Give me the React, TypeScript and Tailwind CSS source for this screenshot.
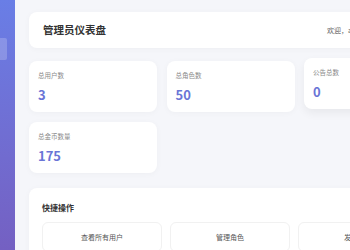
import React from "react";

const font = { fontFamily: '"Noto Sans CJK SC", "Noto Sans", sans-serif' };

function Stat({ label, value, hover }: { label: string; value: string; hover?: boolean }) {
  return (
    <div
      className={`w-[128px] h-[51px] bg-white rounded-[8px] pl-[9px] pt-[10px] ${
        hover ? "-translate-y-[3px] shadow-[0_4px_10px_rgba(0,0,0,0.06)]" : "shadow-[0_1px_6px_rgba(0,0,0,0.035)]"
      }`}
    >
      <div className="text-[6.5px] leading-[9px] text-[#8a8a8a]">{label}</div>
      <div className="mt-[7px] text-[13px] leading-[16px] font-bold text-[#6a75d6]">{value}</div>
    </div>
  );
}

export default function App() {
  return (
    <div className="w-[350px] h-[250px] overflow-hidden flex bg-[#f5f6fa]" style={font}>
      <div className="w-[15px] shrink-0 h-full bg-gradient-to-b from-[#697ee6] to-[#7460c2] pt-[38px]">
        <div className="w-[7px] h-[22px] bg-white/20 rounded-r-[2px]" />
      </div>
      <div className="shrink-0 w-[431px] pl-[14px] pt-[12px]">
        <div className="w-[403px] h-[36px] bg-white rounded-[8px] shadow-[0_1px_6px_rgba(0,0,0,0.035)] flex items-center pl-[14px] pr-[14px]">
          <div className="text-[10.5px] font-bold text-[#333]">管理员仪表盘</div>
          <div className="ml-auto flex items-center gap-[8px]">
            <span className="text-[7px] text-[#666]">欢迎，admin</span>
            <span className="w-[41px] h-[18px] rounded-[4px] bg-[#f0f0f5]" />
          </div>
        </div>
        <div className="mt-[13px] w-[403px] flex flex-wrap gap-x-[9.5px] gap-y-[10px]">
          <Stat label="总用户数" value="3" />
          <Stat label="总角色数" value="50" />
          <Stat label="公告总数" value="0" hover />
          <Stat label="总金币数量" value="175" />
        </div>
        <div className="mt-[15px] w-[403px] h-[80px] bg-white rounded-[8px] shadow-[0_1px_6px_rgba(0,0,0,0.035)] px-[13px] pt-[14px]">
          <div className="text-[8px] leading-[11px] font-bold text-[#333] mb-[9px]">快捷操作</div>
          <div className="flex gap-[8px]">
            {["查看所有用户", "管理角色", "发布公告"].map((t) => (
              <div
                key={t}
                className="w-[120px] h-[30px] border border-[#f1f1f1] rounded-[6px] flex items-center justify-center text-[7px] text-[#555]"
              >
                {t}
              </div>
            ))}
          </div>
        </div>
      </div>
    </div>
  );
}
